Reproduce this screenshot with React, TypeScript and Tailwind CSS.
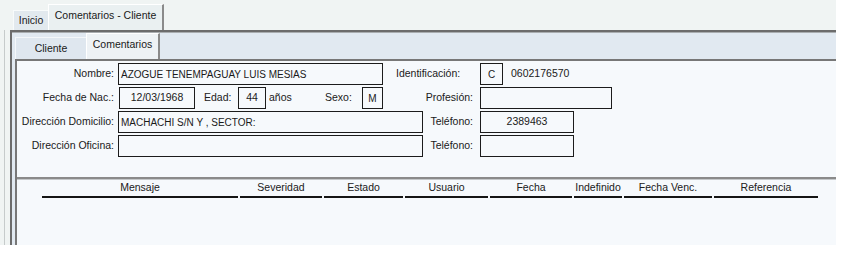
import type { ReactNode } from "react"

const font = "font-['Liberation_Sans',Arial,sans-serif]"

const Label = ({ children, className = "" }: { children: ReactNode; className?: string }) => (
	<span className={`flex h-[22px] shrink-0 items-center text-[10.5px] text-[#202020] ${className}`}>
		{children}
	</span>
)

const Box = ({ children, className = "" }: { children?: ReactNode; className?: string }) => (
	<div
		className={`flex h-[22px] shrink-0 items-center border border-[#1c1c1c] text-[10.5px] text-[#1a1a1a] ${className}`}
	>
		{children}
	</div>
)

const columns = [
	{ title: "Mensaje", w: "w-[196px]" },
	{ title: "Severidad", w: "w-[82px]" },
	{ title: "Estado", w: "w-[79px]" },
	{ title: "Usuario", w: "w-[83px]" },
	{ title: "Fecha", w: "w-[82px]" },
	{ title: "Indefinido", w: "w-[48px]" },
	{ title: "Fecha Venc.", w: "w-[88px]" },
	{ title: "Referencia", w: "w-[104px]" }
]

export default function App() {
	return (
		<div className={`h-[253px] w-[842px] overflow-hidden bg-white ${font}`}>
			<div className="flex h-[245px] w-[836px] flex-col bg-[#f0f4f3]">
				{/* outer tabs */}
				<div className="flex h-[30px] shrink-0 items-end pl-[13px]">
					<div className="flex h-[20px] w-[35px] items-center justify-center border-l border-t border-[#f8fbfb] bg-[#e2e9ee] pt-[1px] text-[10.5px] text-[#1a1a1a]">
						Inicio
					</div>
					<div className="flex h-[26px] w-[116px] items-center justify-center border-r-2 border-t border-l border-r-[#8a8a8a] border-t-white border-l-white bg-[#eaf0f1] pb-[3px] text-[10.5px] text-[#1a1a1a]">
						Comentarios - Cliente
					</div>
				</div>

				<div className="flex min-h-0 flex-1">
					<div className="w-[4px] shrink-0" />
					<div className="w-px shrink-0 bg-[#c6cbcb]" />
					<div className="w-[5px] shrink-0" />

					{/* outer panel */}
					<div className="flex min-w-0 flex-1 flex-col border-l-2 border-t-2 border-[#6c6c6c] bg-[#e1e9f1] shadow-[inset_0_1px_0_#a9adb0]">
						{/* inner tabs */}
						<div className="flex h-[27px] shrink-0 items-end pl-[3px]">
							<div className="flex h-[22px] w-[71px] items-center justify-center border-l border-t border-[#f4f7fa] bg-[#dfe7ef] pt-[1px] text-[10.5px] text-[#1a1a1a]">
								Cliente
							</div>
							<div className="flex h-[26px] w-[74px] items-center justify-center border-r-2 border-l border-t border-r-[#8a8a8a] border-l-white border-t-white bg-[#eef2f5] pb-[3px] text-[10.5px] text-[#1a1a1a]">
								Comentarios
							</div>
						</div>

						{/* inner panel */}
						<div className="ml-[3px] flex min-h-0 flex-1 flex-col border-l-2 border-t-2 border-[#777777] bg-[#f6f9fc]">
							<div className="flex flex-col gap-[2px] pt-[2px]">
								<div className="flex">
									<Label className="w-[97px] justify-end">Nombre:</Label>
									<Box className="ml-[4px] w-[265px] pl-[2px] text-[10px]">
										AZOGUE TENEMPAGUAY LUIS MESIAS
									</Box>
									<Label className="w-[97px] pl-[13px]">Identificación:</Label>
									<Box className="w-[23px] justify-center text-[10px]">C</Box>
									<Label className="ml-[8px]">0602176570</Label>
								</div>

								<div className="flex">
									<Label className="w-[97px] justify-end">Fecha de Nac.:</Label>
									<Box className="ml-[5px] w-[76px] justify-center">12/03/1968</Box>
									<Label className="w-[43px] pl-[9px]">Edad:</Label>
									<Box className="w-[28px] justify-center">44</Box>
									<Label className="w-[59px] pl-[3px]">años</Label>
									<Label className="w-[37px]">Sexo:</Label>
									<Box className="w-[21px] justify-center text-[10px]">M</Box>
									<Label className="w-[97px] justify-end pr-[7px]">Profesión:</Label>
									<Box className="w-[132px]" />
								</div>

								<div className="flex">
									<Label className="w-[97px] justify-end">Dirección Domicilio:</Label>
									<Box className="ml-[4px] w-[305px] pl-[2px] text-[10px]">
										MACHACHI S/N Y , SECTOR:
									</Box>
									<Label className="w-[57px] justify-end pr-[7px]">Teléfono:</Label>
									<Box className="w-[94px] justify-center">2389463</Box>
								</div>

								<div className="flex">
									<Label className="w-[97px] justify-end">Dirección Oficina:</Label>
									<Box className="ml-[4px] w-[305px]" />
									<Label className="w-[57px] justify-end pr-[7px]">Teléfono:</Label>
									<Box className="w-[94px]" />
								</div>
							</div>

							<div className="mt-[20px] h-[3px] shrink-0 border-t-2 border-[#8a8a8a] bg-[#c4c7c9]" />

							<div className="flex gap-[2px] pl-[25px]">
								{columns.map((c) => (
									<div
										key={c.title}
										className={`flex h-[18px] items-center justify-center border-b-2 border-[#151515] text-[10.5px] text-[#202020] ${c.w}`}
									>
										{c.title}
									</div>
								))}
							</div>
						</div>
					</div>
				</div>
			</div>
		</div>
	)
}
